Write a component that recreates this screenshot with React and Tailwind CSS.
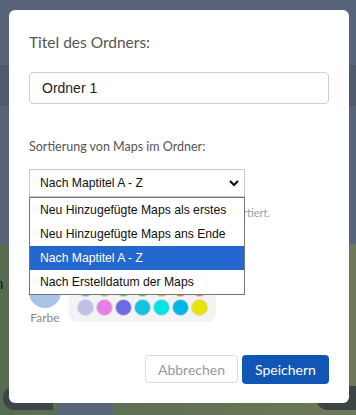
import { useState } from "react";

const raleway = "font-['Lato','Open_Sans',sans-serif]";
const arial = "font-['Liberation_Sans',Arial,sans-serif]";

const options = [
  "Neu Hinzugefügte Maps als erstes",
  "Neu Hinzugefügte Maps ans Ende",
  "Nach Maptitel A - Z",
  "Nach Erstelldatum der Maps",
];

const palette = [
  "#62a8e6", "#8fd65c", "#45cc45", "#27dc27", "#eea023", "#ef7326", "#e96a72",
  "#c0c0e6", "#e87fe6", "#6b6be4", "#13c3e6", "#00e4e4", "#00b7e8", "#e6e600",
];

export default function App() {
  const [selected, setSelected] = useState(2);

  return (
    <div className="relative w-[356px] h-[415px] overflow-hidden">
      {/* Page behind the dialog */}
      <div className="flex flex-col h-full">
        <div className="h-[65px] bg-[#576479]" />
        <div className="h-[41px] bg-[#4f5b6d]" />
        <div className="h-[138px] bg-[#576479]" />
        <div className="flex-1 bg-linear-to-r from-[#566c51] to-[#6d7759] flex flex-col">
          <div className="h-[30px]" />
          <span className={`${arial} text-[15px] text-[#111] leading-5 -ml-[5px]`}>n</span>
          <div className="flex-1" />
          <div className="flex justify-between items-end">
            <div className="flex items-end">
              <div className="ml-[3px] w-[50px] h-[24px] rounded-l-full rounded-tr-lg bg-[#3c4644] mb-[5px]" />
              <div className="ml-[4px] w-[56px] h-[13px] bg-[#5a6578]" />
            </div>
            <div className="w-[40px] h-[24px] rounded-l-full bg-[#3c4644] mb-[5px]" />
          </div>
        </div>
      </div>

      {/* Dialog */}
      <div className="absolute left-[9px] top-[10px] w-[340px] h-[393px] bg-white rounded-md px-5 pt-[22px]">
        <p className={`${raleway} text-[15.5px] leading-5 text-[#555]`}>Titel des Ordners:</p>
        <div className={`mt-5 h-[32px] border border-[#cfcfcf] rounded flex items-center px-3 ${arial} text-[14px] text-[#222]`}>
          Ordner 1
        </div>

        <p className={`${raleway} mt-[34px] text-[12.5px] leading-[18px] text-[#555]`}>
          Sortierung von Maps im Ordner:
        </p>

        <div className="relative mt-[13px] w-[216px]">
          <div className={`h-[28px] border border-[#c9c9c9] flex items-center justify-between pl-[10px] pr-[4px] ${arial} text-[12.2px] text-[#111]`}>
            <span>{options[selected]}</span>
            <svg width="12" height="12" viewBox="0 0 12 12" className="text-[#111]">
              <path d="M2 4 L6 8 L10 4" fill="none" stroke="currentColor" strokeWidth="2.2" />
            </svg>
          </div>
          <div className="absolute left-0 top-[28px] w-[216px] z-10 bg-white border border-[#767676]">
            {options.map((o, i) => (
              <div
                key={o}
                onClick={() => setSelected(i)}
                className={`h-6 flex items-center pl-[10px] ${arial} text-[12.2px] ${
                  i === selected ? "bg-[#2467cf] text-white" : "text-[#111]"
                }`}
              >
                {o}
              </div>
            ))}
          </div>
        </div>
        <p className={`${raleway} mt-[8px] text-[11px] leading-4 text-[#9a9a9a] whitespace-nowrap`}>
          Maps im Ordner werden hier automatisch sortiert.
        </p>

        <div className="mt-[55px] flex items-start gap-2">
          <div className="flex flex-col items-center">
            <div className="w-8 h-8 rounded-full bg-[#a9c2e7]" />
            <span className={`${raleway} text-[12px] leading-4 text-[#8a8a8a] mt-[2px]`}>Farbe</span>
          </div>
          <div className="-mt-[2px] bg-[#f3f3f3] rounded-lg px-2 pt-[6px] pb-[6px] grid grid-cols-7 gap-[2px]">
            {palette.map((c) => (
              <div key={c} className="w-[17px] h-[17px] rounded-full border border-[#dadada]" style={{ background: c }} />
            ))}
          </div>
        </div>

        <div className="absolute right-5 bottom-[19px] flex gap-1">
          <button className={`${raleway} w-[93px] h-[28px] border border-[#dcdcdc] rounded text-[14px] text-[#9a9a9a] bg-white`}>
            Abbrechen
          </button>
          <button className={`${raleway} w-[87px] h-[29px] rounded bg-[#1155b5] text-[14px] text-white`}>
            Speichern
          </button>
        </div>
      </div>
    </div>
  );
}
